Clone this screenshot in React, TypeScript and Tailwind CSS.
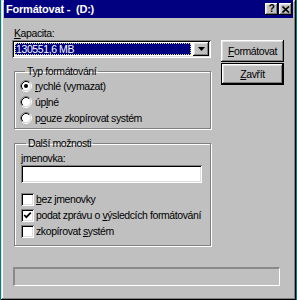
import React from 'react';

const raised =
  'shadow-[inset_-1px_-1px_#000,inset_1px_1px_#fff,inset_-2px_-2px_#808080,inset_2px_2px_#dfdfdf]';
const sunken =
  'shadow-[inset_1px_1px_#808080,inset_-1px_-1px_#fff,inset_2px_2px_#000,inset_-2px_-2px_#dfdfdf]';
const etched = 'border border-[#808080] shadow-[inset_1px_1px_#fff,1px_1px_#fff]';

function Key({ children }: { children: React.ReactNode }) {
  return <span className="underline decoration-1 underline-offset-[1px]">{children}</span>;
}

function Radio({ checked }: { checked?: boolean }) {
  return (
    <svg width="12" height="12" viewBox="0 0 12 12" className="shrink-0">
      <circle cx="6" cy="6" r="4.2" fill="#fff" />
      <path d="M2.11 9.89 A5.5 5.5 0 0 1 9.89 2.11" stroke="#808080" strokeWidth="1" fill="none" />
      <path d="M9.89 2.11 A5.5 5.5 0 0 1 2.11 9.89" stroke="#fff" strokeWidth="1" fill="none" />
      <path d="M2.82 9.18 A4.5 4.5 0 0 1 9.18 2.82" stroke="#000" strokeWidth="1" fill="none" />
      <path d="M9.18 2.82 A4.5 4.5 0 0 1 2.82 9.18" stroke="#dfdfdf" strokeWidth="1" fill="none" />
      {checked && <circle cx="6" cy="6" r="2" fill="#000" />}
    </svg>
  );
}

function Check({ checked }: { checked?: boolean }) {
  return (
    <div className={`w-[13px] h-[13px] shrink-0 bg-white ${sunken} flex items-center justify-center`}>
      {checked && (
        <svg width="13" height="13" viewBox="0 0 13 13">
          <path d="M3.2 6 L5.3 8.2 L9.8 3.6" stroke="#000" strokeWidth="1.7" fill="none" />
        </svg>
      )}
    </div>
  );
}

function Button({ children, isDefault }: { children: React.ReactNode; isDefault?: boolean }) {
  return (
    <div
      className={`h-[22px] w-[63px] flex items-center justify-center bg-[#c0c0c0] ${
        isDefault ? 'border border-black' : ''
      }`}
    >
      <div className={`w-full h-full flex items-center justify-center ${raised}`}>{children}</div>
    </div>
  );
}

export default function App() {
  return (
    <div
      className="w-[297px] h-[300px] bg-[#008080] flex text-[10.5px] tracking-[-0.4px] leading-[13px] text-black whitespace-nowrap"
      style={{ fontFamily: '"Liberation Sans", Arial, sans-serif' }}
    >
      <div className="ml-[1px] w-[295px] h-[300px] bg-[#c0c0c0] px-[3px] pb-[3px] flex flex-col shadow-[inset_-1px_-1px_#000,inset_1px_1px_#dfdfdf,inset_-2px_-2px_#808080,inset_2px_2px_#fff]">
        {/* title bar */}
        <div className="h-[18px] bg-[#000080] flex items-center pl-[2px] pr-[1px]">
          <span className="text-white font-bold text-[11px] tracking-[-0.2px] whitespace-pre flex-1">Formátovat -  (D:)</span>
          <div className="flex gap-[1px]">
            <div className={`w-[13px] h-[12px] bg-[#c0c0c0] ${raised} flex items-center justify-center`}>
              <span className="font-bold text-[10px] leading-[10px]">?</span>
            </div>
            <div className={`w-[13px] h-[12px] bg-[#c0c0c0] ${raised} flex items-center justify-center`}>
              <svg width="8" height="7" viewBox="0 0 8 7">
                <path d="M0.5 0.5 L7 6.5 M7 0.5 L0.5 6.5" stroke="#000" strokeWidth="1.6" />
              </svg>
            </div>
          </div>
        </div>

        <div className="flex flex-1">
          {/* left column */}
          <div className="ml-[8px] w-[199px] pt-[9px] flex flex-col">
            <div className="ml-[2px] h-[13px]">
              <Key>K</Key>apacita:
            </div>
            <div className={`h-[18px] bg-white ${sunken} flex p-[2px]`}>
              <div className="flex-1 ml-[1px] my-[1px] mr-[2px] bg-[#000080] outline outline-1 outline-dotted outline-[#d8d88a] -outline-offset-1 text-white flex items-center pl-[1px]">
                130551,6 MB
              </div>
              <div className={`w-[16px] bg-[#c0c0c0] ${raised} flex items-center justify-center`}>
                <svg width="7" height="4" viewBox="0 0 7 4">
                  <path d="M0 0 H7 L3.5 4 Z" fill="#000" />
                </svg>
              </div>
            </div>

            <fieldset className={`mt-[7px] ml-[2px] w-[197px] ${etched} pl-[5px] pb-[2px]`}>
              <legend className="ml-[5px] px-[2px] h-[13px]">Typ formátování</legend>
              <div className="flex items-center gap-[3px] h-[16px]">
                <Radio checked />
                <span>
                  <Key>r</Key>ychlé (vymazat)
                </span>
              </div>
              <div className="flex items-center gap-[3px] h-[16px]">
                <Radio />
                <span>
                  úp<Key>l</Key>né
                </span>
              </div>
              <div className="flex items-center gap-[3px] h-[16px]">
                <Radio />
                <span>
                  p<Key>o</Key>uze zkopírovat systém
                </span>
              </div>
            </fieldset>

            <fieldset className={`mt-[8px] ml-[2px] w-[197px] ${etched} pl-[6px] pb-[6px]`}>
              <legend className="ml-[5px] px-[2px] h-[13px]">Další možnosti</legend>
              <div className="mt-[2px] h-[13px]">
                <Key>j</Key>menovka:
              </div>
              <div className={`w-[181px] h-[18px] bg-white ${sunken}`} />
              <div className="mt-[8px] flex items-center gap-[2px] h-[16px]">
                <Check />
                <span>
                  <Key>b</Key>ez jmenovky
                </span>
              </div>
              <div className="flex items-center gap-[2px] h-[16px]">
                <Check checked />
                <span>
                  podat zprávu o <Key>v</Key>ýsledcích formátování
                </span>
              </div>
              <div className="flex items-center gap-[2px] h-[16px]">
                <Check />
                <span>
                  zkopírovat <Key>s</Key>ystém
                </span>
              </div>
            </fieldset>
          </div>

          {/* right column */}
          <div className="ml-[10px] pt-[22px] flex flex-col gap-[1px]">
            <Button>
              <Key>F</Key>ormátovat
            </Button>
            <Button isDefault>
              <Key>Z</Key>avřít
            </Button>
          </div>
        </div>

        {/* status bar */}
        <div className="ml-[9px] mb-[11px] w-[267px] h-[19px] border-t-2 border-l-2 border-t-[#8a8a8a] border-l-[#8a8a8a] border-b border-r border-b-white border-r-white" />
      </div>
    </div>
  );
}
